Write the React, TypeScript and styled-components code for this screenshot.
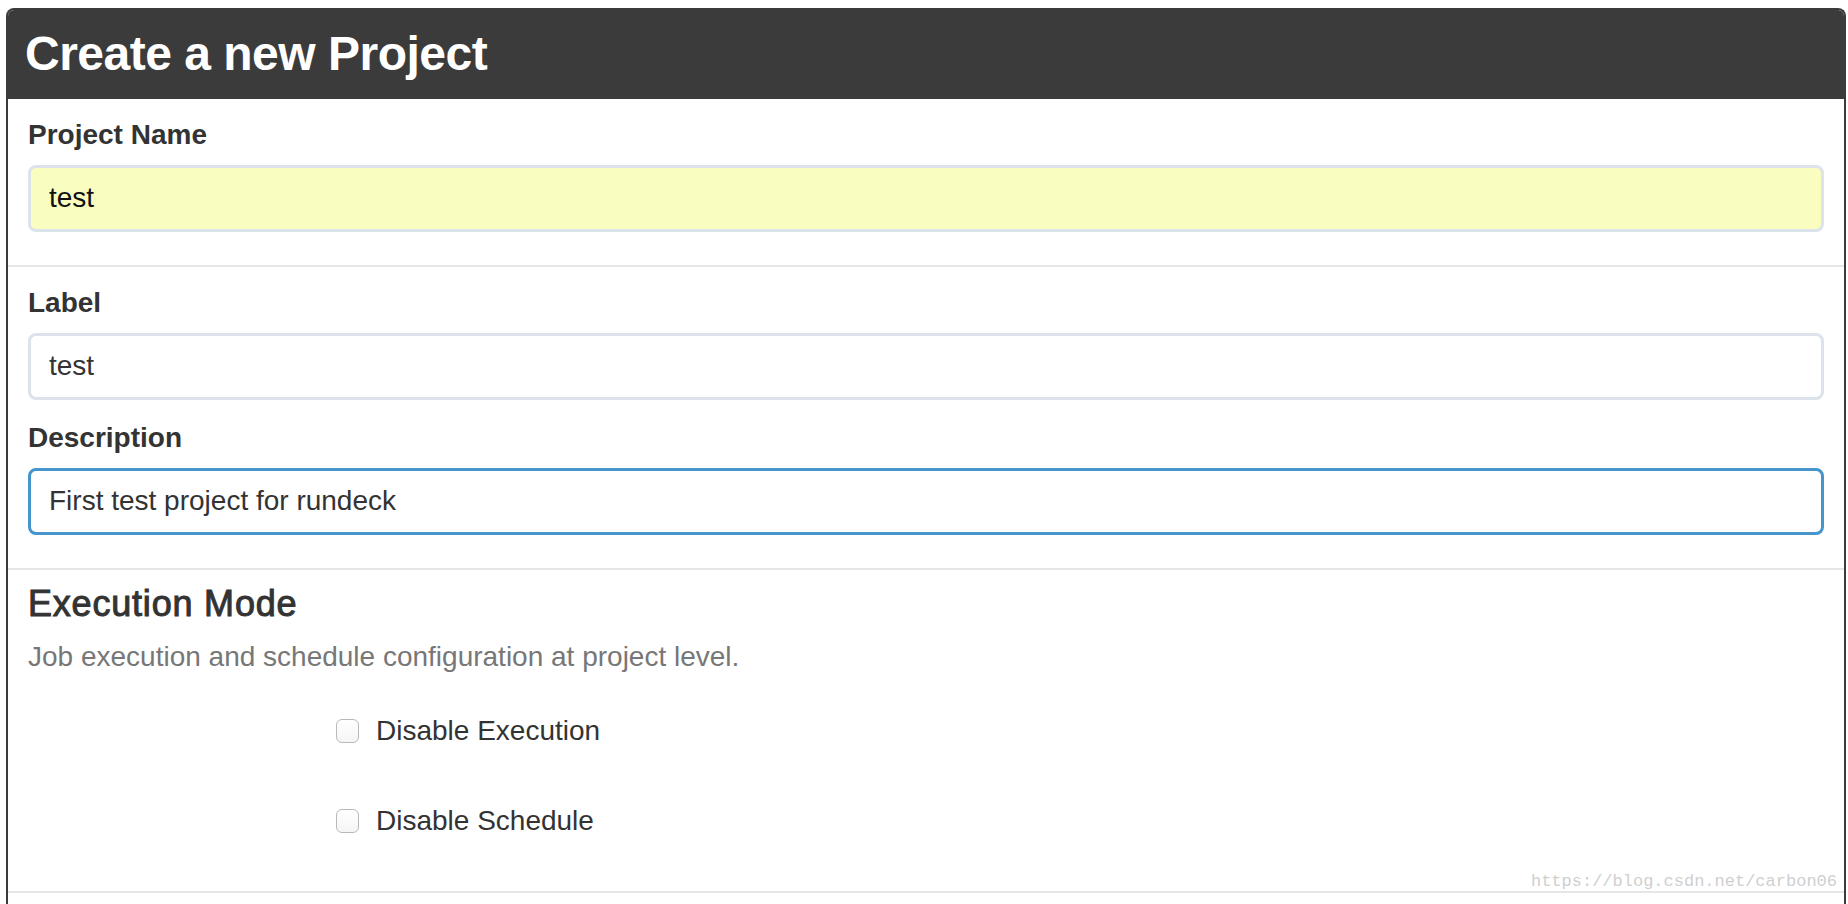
import React from 'react';
import styled, { createGlobalStyle } from 'styled-components';

const GlobalStyle = createGlobalStyle`
  body {
    margin: 8px 2px 0 6px;
    background: #fff;
    font-family: "Liberation Sans", Arial, sans-serif;
    color: #333;
  }
`;

const Panel = styled.div`
  position: relative;
  border: 2px solid #3b3b3b;
  border-bottom: none;
  border-radius: 8px 8px 0 0;
  overflow: hidden;
  background: #fff;
`;

const PanelHeading = styled.div`
  background: #3b3b3b;
  padding: 18px 18px 18px 17px;
`;

const Title = styled.h1`
  margin: 0;
  font-size: 48px;
  font-weight: bold;
  line-height: 1.1;
  letter-spacing: -0.5px;
  color: #fff;
`;

const Section = styled.div<{ $first?: boolean; $padTop?: number; $padBottom?: number }>`
  position: relative;
  padding: ${p => p.$padTop ?? 16}px 20px ${p => p.$padBottom ?? 15}px;
  border-top: ${p => (p.$first ? 'none' : '2px solid #e6e6e6')};
`;

const FormGroup = styled.div`
  margin-bottom: 18px;
`;

const FieldLabel = styled.label`
  display: block;
  margin-bottom: 10px;
  font-size: 28px;
  font-weight: bold;
  line-height: 40px;
  color: #333;
`;

const TextInput = styled.input<{ $autofill?: boolean; $focused?: boolean }>`
  display: block;
  box-sizing: border-box;
  width: 100%;
  height: 67px;
  padding: 0 18px;
  border: 3px solid ${p => (p.$focused ? '#4595cc' : '#dce3ea')};
  border-radius: 8px;
  background: ${p => (p.$autofill ? '#fafdc0' : '#fff')};
  font-family: "Liberation Sans", Arial, sans-serif;
  font-size: 28px;
  color: ${p => (p.$autofill ? '#111' : '#333')};
  outline: none;
`;

const SectionTitle = styled.h4`
  margin: 0 0 13px;
  font-size: 36px;
  font-weight: normal;
  line-height: 40px;
  letter-spacing: 0.8px;
  color: #333;
  -webkit-text-stroke: 1px #333;
`;

const HelpText = styled.p`
  margin: 0;
  font-size: 28px;
  line-height: 40px;
  color: #777;
`;

const CheckList = styled.div`
  display: flex;
  flex-direction: column;
  gap: 50px;
  margin-top: 34px;
  padding-left: 308px;
`;

const CheckRow = styled.label`
  display: flex;
  align-items: center;
  gap: 17px;
  height: 40px;
  font-size: 28px;
  color: #333;
`;

const CheckBox = styled.input`
  appearance: none;
  -webkit-appearance: none;
  box-sizing: border-box;
  width: 23px;
  height: 24px;
  margin: 0;
  border: 1.5px solid #b9b9b9;
  border-radius: 6px;
  background: linear-gradient(#fff, #f5f5f5);
`;

const Watermark = styled.span`
  position: absolute;
  right: 7px;
  bottom: 1px;
  font-family: "Liberation Mono", "Courier New", monospace;
  font-size: 17px;
  line-height: 17px;
  color: #cfcfcf;
`;

const App: React.FC = () => {
  return (
    <>
      <GlobalStyle />
      <Panel>
        <PanelHeading>
          <Title>Create a new Project</Title>
        </PanelHeading>

        <Section $first>
          <FormGroup>
            <FieldLabel>Project Name</FieldLabel>
            <TextInput $autofill defaultValue="test" />
          </FormGroup>
        </Section>

        <Section>
          <FormGroup>
            <FieldLabel>Label</FieldLabel>
            <TextInput defaultValue="test" />
          </FormGroup>
          <FormGroup>
            <FieldLabel>Description</FieldLabel>
            <TextInput $focused defaultValue="First test project for rundeck" />
          </FormGroup>
        </Section>

        <Section $padTop={14} $padBottom={50}>
          <SectionTitle>Execution Mode</SectionTitle>
          <HelpText>Job execution and schedule configuration at project level.</HelpText>
          <CheckList>
            <CheckRow>
              <CheckBox type="checkbox" />
              Disable Execution
            </CheckRow>
            <CheckRow>
              <CheckBox type="checkbox" />
              Disable Schedule
            </CheckRow>
          </CheckList>
          <Watermark>https://blog.csdn.net/carbon06</Watermark>
        </Section>

        <Section $padTop={40} />
      </Panel>
    </>
  );
};

export default App;
